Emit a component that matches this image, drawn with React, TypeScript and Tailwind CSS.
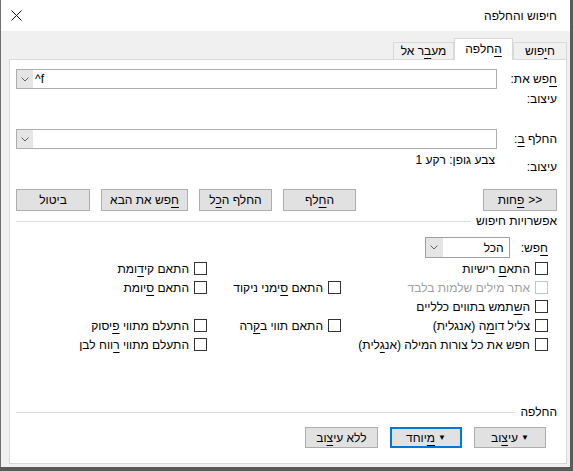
import React from 'react';

// small helper for the accelerator-key underline
const U = ({ children }: { children: React.ReactNode }) => (
  <span className="underline decoration-1 underline-offset-[3px]">{children}</span>
);

const Chevron = () => (
  <svg width="8" height="5" viewBox="0 0 8 5" fill="none">
    <path d="M0.5 0.5 L4 4 L7.5 0.5" stroke="#606060" strokeWidth="1" />
  </svg>
);

const Combo = ({ value }: { value?: string }) => (
  <div className="flex-1 h-[20px] flex border border-[#adadad] bg-white">
    <div dir="ltr" className="flex-1 flex items-center pl-[2px] leading-none">
      {value}
    </div>
    <div className="w-[16px] bg-[#e5e5e5] flex items-center justify-center">
      <Chevron />
    </div>
  </div>
);

const Btn = ({
  className,
  children,
  focused,
}: {
  className: string;
  children: React.ReactNode;
  focused?: boolean;
}) => (
  <div
    className={`${className} flex items-center justify-center bg-[#e1e1e1] ${
      focused ? 'border-2 border-[#0078d7]' : 'border border-[#adadad]'
    }`}
  >
    {children}
  </div>
);

const Check = ({ label, disabled }: { label?: React.ReactNode; disabled?: boolean }) => {
  if (!label) return <div className="h-[19px]" />;
  return (
    <div className="flex items-center gap-[5px] h-[19px]">
      <span
        className={`w-[13px] h-[13px] border bg-white shrink-0 ${
          disabled ? 'border-[#c4c4c4]' : 'border-[#333333]'
        }`}
      />
      <span className={`whitespace-nowrap ${disabled ? 'text-[#a0a0a0]' : ''}`}>{label}</span>
    </div>
  );
};

const GroupTitle = ({ children }: { children: React.ReactNode }) => (
  <div className="h-[16px] flex items-center gap-[5px]">
    <span className="whitespace-nowrap">{children}</span>
    <div className="flex-1 h-px bg-[#dcdcdc]" />
  </div>
);

export default function App() {
  const rows: [React.ReactNode, React.ReactNode, React.ReactNode, boolean?][] = [
    [<>התא<U>ם</U> רישיות</>, null, <>התאם קי<U>ד</U>ומת</>],
    ['אתר מילים שלמות בלבד', <>התאם <U>ס</U>ימני ניקוד</>, <>התאם <U>ס</U>יומת</>, true],
    [<>ה<U>ש</U>תמש בתווים כלליים</>, null, null],
    [<>צליל דו<U>מ</U>ה (אנגלית)</>, <>התאם תווי ב<U>ק</U>רה</>, <>התעלם מתווי <U>פ</U>יסוק</>],
    [<>חפש את כל צורות המילה (אנ<U>ג</U>לית)</>, null, <>התעלם מתווי <U>ר</U>ווח לבן</>],
  ];

  return (
    <div
      dir="rtl"
      className="w-[573px] h-[471px] flex flex-col bg-[#5a5a5a] text-[12px] text-black font-['Liberation_Sans','DejaVu_Sans',sans-serif]"
    >
      <div className="flex-1 flex flex-col mr-[3px] mb-[4px] border-l border-[#707070] bg-[#f0f0f0]">
        {/* title bar */}
        <div className="h-[31px] bg-white flex items-center justify-between pr-[13px] pl-[10px]">
          <span>חיפוש והחלפה</span>
          <svg width="11" height="11" viewBox="0 0 11 11">
            <path d="M0.5 0.5 L10.5 10.5 M10.5 0.5 L0.5 10.5" stroke="#111" strokeWidth="1" />
          </svg>
        </div>

        <div className="flex-1 flex flex-col pl-[8px] pr-[3px] pb-[3px]">
          {/* tabs */}
          <div className="h-[28px] flex items-end">
            <div className="w-[54px] h-[17px] border-t border-x border-[#d9d9d9] flex items-center justify-center">
              <span>
                ח<U>י</U>פוש
              </span>
            </div>
            <div className="relative z-10 w-[59px] h-[22px] -mb-px bg-white border-t border-x border-[#d9d9d9] flex items-center justify-center pb-[1px]">
              <span>
                <U>ה</U>חלפה
              </span>
            </div>
            <div className="w-[61px] h-[17px] border-t border-x border-[#d9d9d9] flex items-center justify-center">
              <span>
                מע<U>ב</U>ר אל
              </span>
            </div>
          </div>

          {/* panel */}
          <div className="flex-1 flex flex-col bg-white border border-[#d9d9d9] pr-[9px] pl-[6px] pb-[15px]">
            <div className="mt-[9px] flex items-center">
              <span className="w-[60px] shrink-0">
                <U>ח</U>פש את:
              </span>
              <Combo value="^f" />
            </div>
            <div className="mt-[2px] h-[16px] flex items-center">עיצוב:</div>

            <div className="mt-[22px] flex items-center">
              <span className="w-[60px] shrink-0">
                החלף <U>ב</U>:
              </span>
              <Combo />
            </div>
            <div className="flex items-start">
              <span className="w-[60px] shrink-0 mt-[10px] h-[16px] flex items-center">עיצוב:</span>
              <span className="mt-[3px] pr-[2px] h-[16px] flex items-center">צבע גופן: רקע 1</span>
            </div>

            <div className="mt-[14px] flex justify-between">
              <Btn className="w-[74px] h-[22px] -ml-px">
                {/* word first (right), arrows after it on the left side of the flex */}
                <div className="flex items-center gap-[4px]">
                  <span dir="ltr">{'>>'}</span>
                  <span>
                    <U>פ</U>חות
                  </span>
                </div>
              </Btn>
              <div className="flex gap-[11px]">
                <Btn className="w-[73px] h-[22px]">
                  <span>
                    ה<U>ח</U>לף
                  </span>
                </Btn>
                <Btn className="w-[73px] h-[22px]">
                  <span>
                    החלף ה<U>כ</U>ל
                  </span>
                </Btn>
                <Btn className="w-[87px] h-[22px]">
                  <span>
                    <U>ח</U>פש את הבא
                  </span>
                </Btn>
                <Btn className="w-[74px] h-[22px]">
                  <span>ביטול</span>
                </Btn>
              </div>
            </div>

            <div className="mt-[2px]">
              <GroupTitle>אפשרויות חיפוש</GroupTitle>
            </div>

            <div className="pr-[9px]">
              <div className="mt-[8px] flex items-center gap-[11px]">
                <span>
                  <U>ח</U>פש:
                </span>
                <div className="w-[85px] h-[21px] flex border border-[#a0a0a0] bg-white">
                  <div className="flex-1 flex items-center pr-[5px]">הכל</div>
                  <div className="w-[17px] bg-[#e5e5e5] flex items-center justify-center">
                    <Chevron />
                  </div>
                </div>
              </div>

              <div className="mt-px grid grid-cols-[207px_134px_1fr]">
                {rows.map(([a, b, c, dis], i) => (
                  <React.Fragment key={i}>
                    <Check label={a} disabled={dis} />
                    <Check label={b} />
                    <Check label={c} />
                  </React.Fragment>
                ))}
              </div>
            </div>

            <div className="mt-auto">
              <GroupTitle>החלפה</GroupTitle>
            </div>
            <div className="mt-[7px] flex gap-[12px] pr-[11px]">
              <Btn className="w-[72px] h-[21px] gap-[3px]">
                <span className="text-[8px] leading-none">▼</span>
                <span>
                  עי<U>צ</U>וב
                </span>
              </Btn>
              <Btn className="w-[72px] h-[21px] gap-[3px]" focused>
                <span className="text-[8px] leading-none">▼</span>
                <span>
                  <U>מ</U>יוחד
                </span>
              </Btn>
              <Btn className="w-[73px] h-[21px]">
                <span>
                  ללא עי<U>צ</U>וב
                </span>
              </Btn>
            </div>
          </div>
        </div>
      </div>
    </div>
  );
}
